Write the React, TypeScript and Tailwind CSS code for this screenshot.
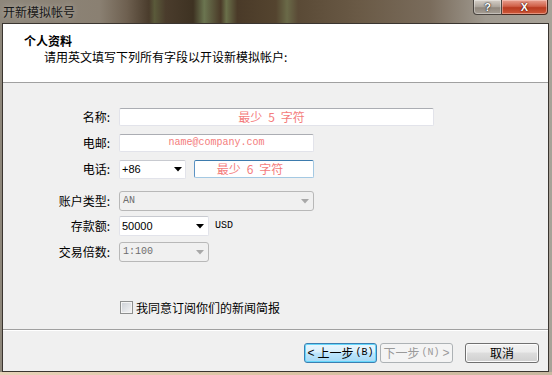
import React from "react";

const mono = "font-['Liberation_Mono',monospace]";
const sans = "font-['Liberation_Sans',sans-serif]";

function Arrow({ disabled }: { disabled?: boolean }) {
  return (
    <svg width="8" height="5" viewBox="0 0 8 5" className="shrink-0">
      <path d="M0 0 H8 L4 4.5 Z" fill={disabled ? "#a8a8a8" : "#000"} />
    </svg>
  );
}

function Label({ children }: { children: React.ReactNode }) {
  return (
    <div className="w-[107px] text-right text-[12px] leading-[14px] text-black shrink-0">{children}</div>
  );
}

function TextBox({ w, children, focused }: { w: string; children?: React.ReactNode; focused?: boolean }) {
  return (
    <div
      className={
        "h-[18px] bg-white border rounded-[2px] flex items-center justify-center " +
        w +
        (focused
          ? " border-[#a4c9e3] border-t-[#3d7bad] border-l-[#5c93c4]"
          : " border-[#e2e3ea] border-t-[#abadb3]")
      }
    >
      {children}
    </div>
  );
}

function Row({ label, h, mt, children }: { label: string; h: string; mt: string; children: React.ReactNode }) {
  return (
    <div className={"flex items-center " + h + " " + mt}>
      <Label>{label}</Label>
      <div className="ml-[9px] flex items-center h-full">{children}</div>
    </div>
  );
}

function Hint({ n, className }: { n: string; className?: string }) {
  return (
    <span className={"flex items-center text-[12px] text-[#f47c7c] leading-none " + (className ?? "")}>
      最少<span className="mx-[6px]">{n}</span>字符
    </span>
  );
}

export default function App() {
  return (
    <div className="w-[552px] h-[375px] flex flex-col overflow-hidden font-['Noto_Sans_CJK_SC','Noto_Sans',sans-serif] bg-[linear-gradient(90deg,#8e877b_0%,#8a8072_18%,#6e6050_23%,#4a3c2c_27%,#5a5a3a_28%,#4a3c2c_30%,#3e3222_35%,#6b7550_37%,#4a3a28_40%,#6a704a_41%,#4a3a28_43%,#54442f_50%,#6a6a48_52%,#5a4a36_54%,#6a5a46_65%,#7a6c5c_78%,#a09a90_88%,#a8a298_100%)]">
      {/* Title bar */}
      <div className="h-[23px] flex items-start shrink-0">
        <div className="h-[23px] flex items-center pl-[3px] text-[12px] text-[#161616] [text-shadow:0_0_6px_rgba(255,255,255,0.45)]">
          开新模拟帐号
        </div>
        <div className="ml-auto mr-[4px] flex h-[15px]">
          <div className="w-[29px] h-[15px] border border-[#4a4540] border-t-0 rounded-bl-[4px] bg-[linear-gradient(#d6d0c8,#aaa39a_50%,#8f877d_55%,#a69e94)] shadow-[inset_0_0_0_1px_rgba(255,255,255,0.35)] flex items-center justify-center">
            <span className={"text-[11px] font-bold text-white leading-none [text-shadow:0_0_2px_#222,0_0_1px_#000] " + sans}>?</span>
          </div>
          <div className="w-[46px] h-[15px] border border-[#4a2a20] border-t-0 border-l-0 rounded-br-[4px] bg-[linear-gradient(#e8a090,#d06048_45%,#b83a20_55%,#d05a3a)] shadow-[inset_0_0_0_1px_rgba(255,220,210,0.45)] flex items-center justify-center">
            <span className={"text-[11px] font-bold text-white leading-none [text-shadow:0_0_2px_#5a1000,0_0_1px_#300] " + sans}>X</span>
          </div>
        </div>
      </div>

      {/* Client area */}
      <div className="flex-1 flex">
        <div className="ml-[2px] mr-[3px] flex-1 border border-[#3a3530] flex flex-col">
          {/* header */}
          <div className="h-[59px] bg-white border-b border-[#a0a0a0] pt-[9px] pl-[21px] shrink-0">
            <div className="text-[12px] leading-[16px] font-bold text-black">个人资料</div>
            <div className="text-[12px] leading-[16px] text-black pl-[20px]">请用英文填写下列所有字段以开设新模拟帐户:</div>
          </div>
          {/* body */}
          <div className="flex-1 bg-[#f0f0f0] border-b border-[#a0a0a0] flex flex-col pt-[25px]">
            <Row label="名称:" h="h-[18px]" mt="mt-0">
              <TextBox w="w-[315px]">
                <Hint n="5" className="mr-[10px]" />
              </TextBox>
            </Row>
            <Row label="电邮:" h="h-[18px]" mt="mt-[8px]">
              <TextBox w="w-[195px]">
                <span className={"text-[10px] text-[#f47c7c] leading-none " + mono}>name@company.com</span>
              </TextBox>
            </Row>
            <Row label="电话:" h="h-[20px]" mt="mt-[7px]">
              <div className="w-[67px] h-[19px] bg-white border border-[#e2e3ea] border-t-[#c8cad0] rounded-[2px] flex items-center pl-[2px] pr-[3px]">
                <span className={"text-[11px] text-black leading-none " + sans}>+86</span>
                <div className="ml-auto"><Arrow /></div>
              </div>
              <div className="ml-[8px]">
                <TextBox w="w-[120px]" focused>
                  <Hint n="6" className="mr-[8px]" />
                </TextBox>
              </div>
            </Row>
            <Row label="账户类型:" h="h-[20px]" mt="mt-[12px]">
              <div className="w-[195px] h-[20px] bg-[#f0f0f0] border border-[#b8b8b8] rounded-[3px] flex items-center pl-[3px] pr-[4px]">
                <span className={"text-[10px] text-[#6d6d6d] leading-none " + mono}>AN</span>
                <div className="ml-auto"><Arrow disabled /></div>
              </div>
            </Row>
            <Row label="存款额:" h="h-[20px]" mt="mt-[5px]">
              <div className="w-[90px] h-[20px] bg-white border border-[#e2e3ea] border-t-[#c8cad0] rounded-[2px] flex items-center pl-[2px] pr-[4px]">
                <span className={"text-[11px] text-black leading-none " + sans}>50000</span>
                <div className="ml-auto"><Arrow /></div>
              </div>
              <span className={"ml-[6px] text-[10px] text-black leading-none " + mono}>USD</span>
            </Row>
            <Row label="交易倍数:" h="h-[20px]" mt="mt-[6px]">
              <div className="w-[90px] h-[20px] bg-[#f0f0f0] border border-[#b8b8b8] rounded-[3px] flex items-center pl-[3px] pr-[4px]">
                <span className={"text-[10px] text-[#6d6d6d] leading-none " + mono}>1:100</span>
                <div className="ml-auto"><Arrow disabled /></div>
              </div>
            </Row>
            <div className="mt-[39px] h-[13px] flex items-center pl-[117px]">
              <div className="w-[13px] h-[13px] border border-[#8e8f8f] bg-[linear-gradient(135deg,#cbcfd5,#f6f6f6)] shadow-[inset_0_0_0_1px_#f4f4f4] shrink-0" />
              <span className="ml-[3px] text-[12px] leading-[14px] text-black">我同意订阅你们的新闻简报</span>
            </div>
          </div>
          {/* footer */}
          <div className="h-[41px] bg-[#f0f0f0] border-t border-white flex items-start justify-end pt-[12px] pr-[9px] shrink-0">
            <div className="w-[73px] h-[20px] border border-[#3c7fb1] rounded-[3px] bg-[linear-gradient(#eaf6fd,#d9f0fc_45%,#bee6fd_50%,#a7d9f5)] shadow-[inset_0_0_0_1px_#66d7fb] flex items-center justify-center text-[12px] leading-none text-black">
              <span className={sans}>&lt;</span>
              <span className="ml-[3px]">上一步</span>
              <span className={"ml-[2px] text-[10px] " + mono}>(B)</span>
            </div>
            <div className="ml-[3px] w-[73px] h-[20px] border border-[#adb2b5] rounded-[3px] bg-[#f4f4f4] flex items-center justify-center text-[12px] leading-none text-[#9a9a9a]">
              <span>下一步</span>
              <span className={"ml-[2px] text-[10px] " + mono}>(N)</span>
              <span className={"ml-[3px] " + sans}>&gt;</span>
            </div>
            <div className="ml-[12px] w-[74px] h-[20px] border border-[#707070] rounded-[3px] bg-[linear-gradient(#f2f2f2,#ebebeb_45%,#dddddd_50%,#cfcfcf)] shadow-[inset_0_0_0_1px_#fcfcfc] flex items-center justify-center text-[12px] leading-none text-black">
              取消
            </div>
          </div>
        </div>
      </div>
      <div className="h-[3px] shrink-0 bg-[linear-gradient(90deg,#e8d2b8,#dcc4a4_50%,#c8b8a0)]" />
    </div>
  );
}
